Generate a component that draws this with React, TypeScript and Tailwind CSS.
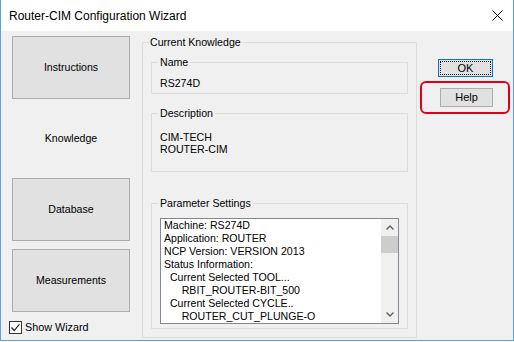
const navButtons = ['Instructions', null, 'Database', 'Measurements'];

const paramLines = [
  'Machine: RS274D',
  'Application: ROUTER',
  'NCP Version: VERSION 2013',
  'Status Information:',
  '  Current Selected TOOL...',
  '      RBIT_ROUTER-BIT_500',
  '  Current Selected CYCLE..',
  '      ROUTER_CUT_PLUNGE-O',
];

function Chevron({ up }: { up?: boolean }) {
  return (
    <svg width="8" height="5" viewBox="0 0 8 5">
      <path d={up ? 'M0.5 4.5 L4 1 L7.5 4.5' : 'M0.5 0.5 L4 4 L7.5 0.5'} fill="none" stroke="#606060" strokeWidth="1.4" />
    </svg>
  );
}

export default function App() {
  return (
    <div className="w-[514px] h-[342px] bg-white font-['Liberation_Sans',Arial,sans-serif] text-black">
      <div className="h-[341px] border-x border-b border-[#5ea3d6] flex flex-col">
        {/* title bar */}
        <div className="h-[31px] shrink-0 flex items-center justify-between pl-[8px] pr-[10px]">
          <span className="text-[12px] leading-[14px]">Router-CIM Configuration Wizard</span>
          <svg width="11" height="11" viewBox="0 0 11 11">
            <path d="M0.5 0.5 L10.5 10.5 M10.5 0.5 L0.5 10.5" stroke="#000" strokeWidth="1" />
          </svg>
        </div>

        <div className="flex-1 bg-[#f0f0f0] flex text-[10.6px]">
          {/* left nav */}
          <div className="w-[141px] shrink-0 pl-[11px] pt-[5px] flex flex-col">
            <div className="flex flex-col gap-[8px]">
              {navButtons.map((label, i) =>
                label ? (
                  <div
                    key={i}
                    className="w-[118px] h-[63px] border border-[#adadad] bg-[#e1e1e1] flex items-center justify-center"
                  >
                    {label}
                  </div>
                ) : (
                  <div key={i} className="w-[118px] h-[63px] flex items-center justify-center">
                    Knowledge
                  </div>
                ),
              )}
            </div>
            <div className="mt-[7px] -ml-[3px] flex items-center">
              <div className="w-[13px] h-[13px] border border-[#333333] bg-white flex items-center justify-center">
                <svg width="11" height="11" viewBox="0 0 11 11">
                  <path d="M1.5 5.5 L4.3 8.5 L9.5 2" fill="none" stroke="#222" strokeWidth="1.2" />
                </svg>
              </div>
              <span className="ml-[3px] text-[10.8px]">Show Wizard</span>
            </div>
          </div>

          {/* current knowledge */}
          <div className="pt-[5px]">
            <fieldset className="w-[275px] h-[302px] border border-[#dcdcdc] px-[8px] pt-[8px]">
              <legend className="ml-[-2px] px-[1px] leading-[12px]">Current Knowledge</legend>

              <fieldset className="h-[38px] border border-[#dcdcdc] px-[8px] pt-[9px]">
                <legend className="ml-[-2px] px-[2px] leading-[12px]">Name</legend>
                <div className="leading-[13px]">RS274D</div>
              </fieldset>

              <fieldset className="mt-[13px] h-[65px] border border-[#dcdcdc] px-[8px] pt-[12px]">
                <legend className="ml-[-2px] px-[2px] leading-[12px]">Description</legend>
                <div className="leading-[12px]">CIM-TECH</div>
                <div className="leading-[12px]">ROUTER-CIM</div>
              </fieldset>

              <fieldset className="mt-[25px] h-[132px] border border-[#dcdcdc] px-[8px] pt-[9px]">
                <legend className="ml-[-2px] px-[2px] leading-[12px]">Parameter Settings</legend>
                <div className="h-[106px] border border-[#828790] bg-white flex">
                  <div className="flex-1 pl-[3px] overflow-hidden whitespace-pre leading-[13px]">
                    {paramLines.map((l) => (
                      <div key={l}>{l}</div>
                    ))}
                  </div>
                  <div className="w-[17px] bg-[#f0f0f0] flex flex-col">
                    <div className="h-[17px] flex items-center justify-center">
                      <Chevron up />
                    </div>
                    <div className="h-[17px] bg-[#cdcdcd]" />
                    <div className="flex-1" />
                    <div className="h-[17px] flex items-center justify-center">
                      <Chevron />
                    </div>
                  </div>
                </div>
              </fieldset>
            </fieldset>
          </div>

          {/* actions */}
          <div className="flex-1 flex flex-col items-start">
            <div className="ml-[21px] mt-[28px] w-[55px] h-[18px] border border-[#0078d7] bg-[#e1e1e1] p-[1px]">
              <div className="h-full border border-dotted border-black flex items-center justify-center text-[11px]">
                OK
              </div>
            </div>
            <div className="ml-[3px] mt-[4px] w-[90px] h-[33px] border-2 border-[#e0001b] rounded-[6px] pl-[18px] pt-[5px]">
              <div className="w-[53px] h-[19px] border border-[#adadad] bg-[#e1e1e1] flex items-center justify-center text-[11px]">
                Help
              </div>
            </div>
          </div>
        </div>
      </div>
    </div>
  );
}
